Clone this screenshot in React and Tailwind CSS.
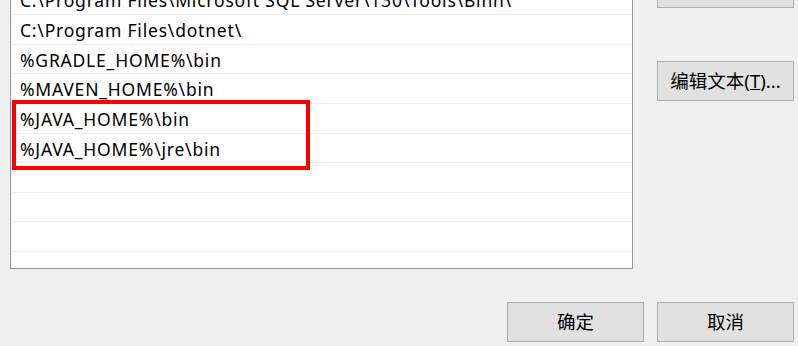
import React from 'react';

const rows = [
    { text: 'C:\\Program Files\\Microsoft SQL Server\\130\\Tools\\Binn\\', h: 'h-[30px]' },
    { text: 'C:\\Program Files\\dotnet\\', h: 'h-[30px]' },
    { text: '%GRADLE_HOME%\\bin', h: 'h-[29px]' },
    { text: '%MAVEN_HOME%\\bin', h: 'h-[30px]' },
    { text: '%JAVA_HOME%\\bin', h: 'h-[30px]' },
    { text: '%JAVA_HOME%\\jre\\bin', h: 'h-[29px]' },
    { text: '', h: 'h-[30px]' },
    { text: '', h: 'h-[29px]' },
    { text: '', h: 'h-[30px]' },
];

function WinButton({ children, className = '' }) {
    return (
        <button
            className={`w-[137px] h-[40px] bg-[#e1e1e1] border border-[#adadad] text-[18.5px] text-black flex items-center justify-center ${className}`}>
            {children}
        </button>
    );
}

export default function App() {
    return (
        <div
            className="relative w-[798px] h-[346px] bg-[#f0f0f0] overflow-hidden"
            style={{ fontFamily: '"Noto Sans", "Noto Sans CJK SC", sans-serif' }}>
            <div className="flex flex-row items-start pl-[10px]">
                <div className="-mt-[16px] w-[623px] h-[285px] bg-white border border-[#8f939b] flex flex-col">
                    {rows.map((row, i) => (
                        <div
                            key={i}
                            className={`${row.h} mx-[1px] border-b border-[#eeeeee] flex items-center pl-[8px] text-[17.5px] tracking-[0.8px] text-black whitespace-nowrap`}>
                            <span className="mt-[2px]">{row.text}</span>
                        </div>
                    ))}
                </div>

                <div className="flex flex-col ml-[24px] -mt-[32px]">
                    <WinButton>下移(O)</WinButton>
                    <WinButton className="mt-[53px]">
                        <span>编辑文本(<span className="underline">T</span>)...</span>
                    </WinButton>
                </div>
            </div>

            <div className="flex flex-row justify-end gap-[13px] pr-[4px] mt-[33px]">
                <WinButton>确定</WinButton>
                <WinButton>取消</WinButton>
            </div>

            <div className="absolute left-[12px] top-[100px] w-[298px] h-[70px] border-[4px] border-[#ff0000]" />
        </div>
    );
}
